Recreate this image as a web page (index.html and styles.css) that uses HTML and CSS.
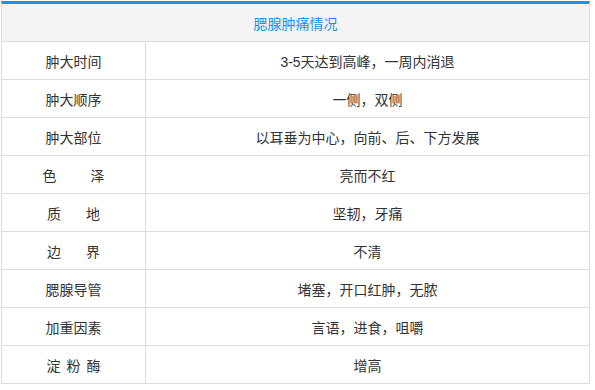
FILE: index.html
```html
<!DOCTYPE html>
<html lang="zh">
<head>
<meta charset="utf-8">
<title>腮腺肿痛情况</title>
<link rel="stylesheet" href="styles.css">
</head>
<body>
<div class="table">
  <div class="head">腮腺肿痛情况</div>
  <div class="row"><div class="label">肿大时间</div><div class="value">3-5天达到高峰，一周内消退</div></div>
  <div class="row"><div class="label">肿大顺序</div><div class="value">一侧，双侧</div></div>
  <div class="row"><div class="label">肿大部位</div><div class="value">以耳垂为中心，向前、后、下方发展</div></div>
  <div class="row"><div class="label">色<span class="gap-xl"></span>泽</div><div class="value">亮而不红</div></div>
  <div class="row"><div class="label">质<span class="gap-l"></span>地</div><div class="value">坚韧，牙痛</div></div>
  <div class="row"><div class="label">边<span class="gap-l"></span>界</div><div class="value">不清</div></div>
  <div class="row"><div class="label">腮腺导管</div><div class="value">堵塞，开口红肿，无脓</div></div>
  <div class="row"><div class="label">加重因素</div><div class="value">言语，进食，咀嚼</div></div>
  <div class="row"><div class="label">淀<span class="gap-s"></span>粉<span class="gap-s"></span>酶</div><div class="value">增高</div></div>
</div>
</body>
</html>
```
FILE: styles.css
```css
html, body {
  margin: 0;
  padding: 0;
  background: #ffffff;
}
body {
  padding: 1px 0 0 1px;
  font-family: "Liberation Sans", "Noto Sans CJK SC", sans-serif;
  font-size: 14px;
  color: #333333;
}
.table {
  width: 589px;
  box-sizing: border-box;
  border: 1px solid #dddddd;
  border-top: 3px solid #1593ee;
}
.head {
  height: 37px;
  display: flex;
  align-items: center;
  justify-content: center;
  background: #f4f4f4;
  color: #1593ee;
  border-bottom: 1px solid #dddddd;
}
.row {
  display: flex;
  height: 38px;
  box-sizing: border-box;
  border-bottom: 1px solid #dddddd;
}
.row:last-child {
  border-bottom: none;
  height: 37px;
}
.label {
  width: 144px;
  box-sizing: border-box;
  border-right: 1px solid #dddddd;
  display: flex;
  align-items: center;
  justify-content: center;
}
.value {
  flex: 1;
  display: flex;
  align-items: center;
  justify-content: center;
}
.gap-xl { display: inline-block; width: 34px; }
.gap-l { display: inline-block; width: 25px; }
.gap-s { display: inline-block; width: 6px; }
```
